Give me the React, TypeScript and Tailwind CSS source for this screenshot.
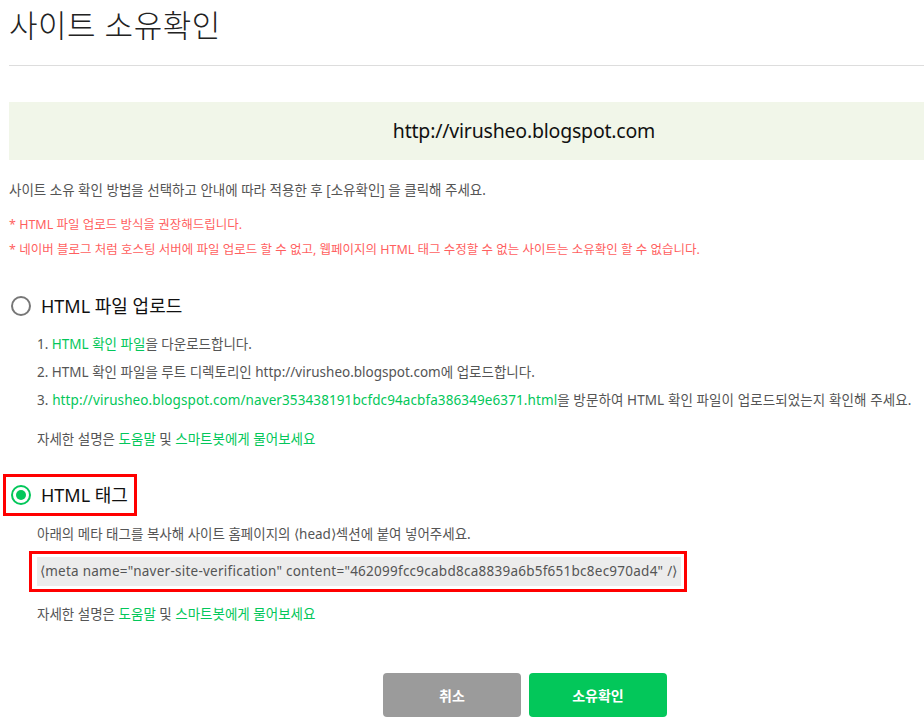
import React from "react";

const font = { fontFamily: '"Noto Sans", "Noto Sans CJK KR", sans-serif' };

function Help() {
  return (
    <div className="text-[13.5px] leading-[20px] text-[#555]">
      자세한 설명은 <span className="text-[#03c75a]">도움말</span> 및{" "}
      <span className="text-[#03c75a]">스마트봇에게 물어보세요</span>
    </div>
  );
}

export default function App() {
  return (
    <div className="w-[924px] h-[725px] overflow-hidden bg-white" style={font}>
      <div className="w-[1031px] pl-[9px]">
        <h1 className="text-[31px] leading-[40px] pt-[5px] font-light text-[#222] tracking-[0.5px]">
          사이트 소유확인
        </h1>
        <div className="mt-[20px] h-px bg-[#dddddd]" />
        <div className="mt-[36px] h-[58px] bg-[#f1f6e9] flex items-center justify-center text-[19.5px] text-[#111] tracking-[-0.2px]">
          <span className="ml-[8px]">http://virusheo.blogspot.com</span>
        </div>
        <p className="mt-[20px] text-[13.5px] leading-[20px] text-[#555]">
          사이트 소유 확인 방법을 선택하고 안내에 따라 적용한 후 [소유확인] 을 클릭해 주세요.
        </p>
        <p className="mt-[15px] text-[12.5px] leading-[20px] text-[#ff5f5f]">
          * HTML 파일 업로드 방식을 권장해드립니다.
        </p>
        <p className="mt-[5px] text-[12.5px] leading-[20px] text-[#ff5f5f]">
          * 네이버 블로그 처럼 호스팅 서버에 파일 업로드 할 수 없고, 웹페이지의 HTML 태그 수정할 수 없는 사이트는 소유확인 할 수 없습니다.
        </p>

        <div className="mt-[31px] flex items-center h-[30px]">
          <span className="ml-[2px] w-[20px] h-[20px] rounded-full border-2 border-[#777]" />
          <span className="ml-[10px] text-[18px] text-[#111]">HTML 파일 업로드</span>
        </div>
        <div className="pl-[28px] mt-[13px] flex flex-col gap-[8px] text-[13.5px] leading-[20px] text-[#555]">
          <div>
            1. <span className="text-[#03c75a]">HTML 확인 파일</span>을 다운로드합니다.
          </div>
          <div>2. HTML 확인 파일을 루트 디렉토리인 http://virusheo.blogspot.com에 업로드합니다.</div>
          <div className="whitespace-nowrap tracking-[0.1px]">
            3.{" "}
            <span className="text-[#03c75a]">
              http://virusheo.blogspot.com/naver353438191bcfdc94acbfa386349e6371.html
            </span>
            을 방문하여 HTML 확인 파일이 업로드되었는지 확인해 주세요.
          </div>
          <div className="mt-[11px]">
            <Help />
          </div>
        </div>

        <div className="mt-[25px] -ml-[6px] w-[134px] h-[42px] border-[3px] border-[#ff0000] flex items-center">
          <span className="ml-[5px] w-[20px] h-[20px] rounded-full border-2 border-[#03c75a] flex items-center justify-center">
            <span className="w-[10px] h-[10px] rounded-full bg-[#03c75a]" />
          </span>
          <span className="ml-[10px] text-[18px] text-[#111]">HTML 태그</span>
        </div>
        <div className="pl-[28px] mt-[8px] text-[13.5px] leading-[20px] text-[#555]">
          아래의 메타 태그를 복사해 사이트 홈페이지의 ⟨head⟩섹션에 붙여 넣어주세요.
        </div>
        <div className="ml-[20px] mt-[7px] w-[658px] h-[41px] border-[3px] border-[#ff0000] p-[3px] pl-[5px]">
          <div className="h-full bg-[#ececec] flex items-center pl-[3px] text-[13.5px] text-[#555] whitespace-nowrap tracking-[0.25px]">
            ⟨meta name="naver-site-verification" content="462099fcc9cabd8ca8839a6b5f651bc8ec970ad4" /⟩
          </div>
        </div>
        <div className="pl-[28px] mt-[12px]">
          <Help />
        </div>

        <div className="mt-[49px] flex gap-[8px] pl-[374px]">
          <button className="w-[138px] h-[44px] rounded-[4px] bg-[#9b9b9b] text-white text-[14px] font-bold">
            취소
          </button>
          <button className="w-[138px] h-[44px] rounded-[4px] bg-[#03c75a] text-white text-[14px] font-bold">
            소유확인
          </button>
        </div>
      </div>
    </div>
  );
}
